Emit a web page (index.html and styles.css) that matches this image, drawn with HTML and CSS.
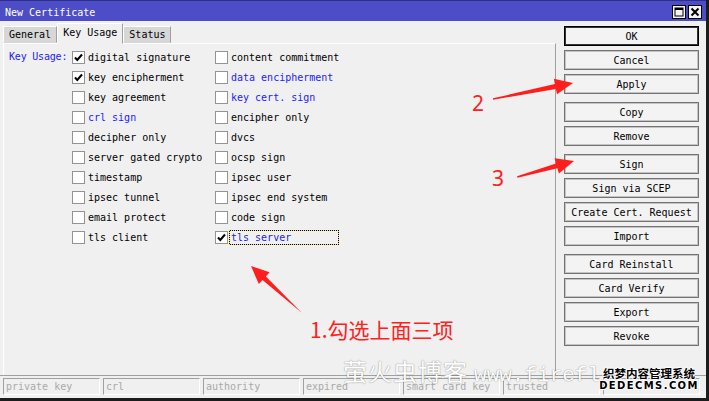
FILE: index.html
```html
<!DOCTYPE html>
<html lang="en">
<head>
  <meta charset="UTF-8" />
  <title>New Certificate</title>
  <link rel="stylesheet" href="styles.css">
</head>
<body>
  <div class="window">
    <div class="titlebar">
      <span class="title">New Certificate</span>
      <div class="title-btns">
        <span class="tbtn">
          <svg width="12" height="12" viewBox="0 0 12 12"><rect x="2" y="2" width="8" height="8" fill="none" stroke="#000" stroke-width="1"/><rect x="2" y="2" width="8" height="2" fill="#000"/></svg>
        </span>
        <span class="tbtn">
          <svg width="12" height="12" viewBox="0 0 12 12"><path d="M2.5 2.5 L9.5 9.5 M9.5 2.5 L2.5 9.5" stroke="#000" stroke-width="2"/></svg>
        </span>
      </div>
    </div>

    <div class="client">
      <div class="main">
        <div class="tabs">
          <div class="tab">General</div>
          <div class="tab active">Key Usage</div>
          <div class="tab">Status</div>
        </div>
        <div class="panel">
          <div class="grid">
            <div class="ku-label">Key Usage:</div>

            <div class="item"><span class="box on"><svg width="11" height="11" viewBox="0 0 11 11"><path d="M2 5.5 L4.3 8 L9 2.5" fill="none" stroke="#000" stroke-width="2"/></svg></span><span class="lbl">digital signature</span></div>
            <div class="item"><span class="box"></span><span class="lbl">content commitment</span></div>

            <div class="item"><span class="box on"><svg width="11" height="11" viewBox="0 0 11 11"><path d="M2 5.5 L4.3 8 L9 2.5" fill="none" stroke="#000" stroke-width="2"/></svg></span><span class="lbl">key encipherment</span></div>
            <div class="item"><span class="box"></span><span class="lbl blue">data encipherment</span></div>

            <div class="item"><span class="box"></span><span class="lbl">key agreement</span></div>
            <div class="item"><span class="box"></span><span class="lbl blue">key cert. sign</span></div>

            <div class="item"><span class="box"></span><span class="lbl blue">crl sign</span></div>
            <div class="item"><span class="box"></span><span class="lbl">encipher only</span></div>

            <div class="item"><span class="box"></span><span class="lbl">decipher only</span></div>
            <div class="item"><span class="box"></span><span class="lbl">dvcs</span></div>

            <div class="item"><span class="box"></span><span class="lbl">server gated crypto</span></div>
            <div class="item"><span class="box"></span><span class="lbl">ocsp sign</span></div>

            <div class="item"><span class="box"></span><span class="lbl">timestamp</span></div>
            <div class="item"><span class="box"></span><span class="lbl">ipsec user</span></div>

            <div class="item"><span class="box"></span><span class="lbl">ipsec tunnel</span></div>
            <div class="item"><span class="box"></span><span class="lbl">ipsec end system</span></div>

            <div class="item"><span class="box"></span><span class="lbl">email protect</span></div>
            <div class="item"><span class="box"></span><span class="lbl">code sign</span></div>

            <div class="item"><span class="box"></span><span class="lbl">tls client</span></div>
            <div class="item"><span class="box on"><svg width="11" height="11" viewBox="0 0 11 11"><path d="M2 5.5 L4.3 8 L9 2.5" fill="none" stroke="#000" stroke-width="2"/></svg></span><span class="focus"><span class="lbl blue">tls server</span></span></div>
          </div>
        </div>
      </div>

      <div class="side">
        <button class="btn default">OK</button>
        <button class="btn">Cancel</button>
        <button class="btn group-end">Apply</button>
        <button class="btn">Copy</button>
        <button class="btn group-end">Remove</button>
        <button class="btn">Sign</button>
        <button class="btn">Sign via SCEP</button>
        <button class="btn">Create Cert. Request</button>
        <button class="btn group-end">Import</button>
        <button class="btn">Card Reinstall</button>
        <button class="btn">Card Verify</button>
        <button class="btn">Export</button>
        <button class="btn">Revoke</button>
      </div>
    </div>

    <div class="status">
      <div class="field">private key</div>
      <div class="field">crl</div>
      <div class="field">authority</div>
      <div class="field">expired</div>
      <div class="field">smart card key</div>
      <div class="field">trusted</div>
      <div class="field"></div>
    </div>

    <!-- red hand-drawn hints -->
    <svg class="marks" width="709" height="401" viewBox="0 0 709 401">
      <polygon fill="#ff1e1e" points="251,266 269.6,272.3 265.9,276.4 302,313 262.5,280 258.8,284.1"/>
      <polygon fill="#ff1e1e" points="573,83 553.8,78.7 554.9,84.1 493,98.3 493,99.8 555.9,88.9 557,94.3"/>
      <polygon fill="#ff1e1e" points="574,161 554.5,158.2 556,163.5 517,176.2 517.5,177.8 557.4,168.3 558.9,173.6"/>
    </svg>
    <span class="note note-1">1.勾选上面三项</span>
    <span class="note note-2">2</span>
    <span class="note note-3">3</span>

    <div class="watermark"><span class="wm-cjk">萤火虫博客</span> <span class="wm-url">www.firefly</span></div>
    <div class="logo">
      <span class="logo-cn">织梦内容管理系统</span>
      <span class="logo-en">DEDECMS.COM</span>
    </div>
  </div>
</body>
</html>
```

FILE: styles.css
```css
body {
  margin: 0;
  background: #f0f0f0;
  font-family: "DejaVu Sans Mono", "Liberation Mono", monospace;
  font-size: 10px;
  color: #000;
}
.window {
  position: relative;
  width: 709px;
  height: 401px;
  box-sizing: border-box;
  border-right: 3px solid #1c1c1c;
  border-bottom: 3px solid #1c1c1c;
  background: #f0f0f0;
  overflow: hidden;
  display: flex;
  flex-direction: column;
}

/* title bar */
.titlebar {
  height: 21px;
  flex: none;
  box-sizing: border-box;
  border-top: 1px solid #2e2e86;
  background: #4d4dc7;
  color: #fff;
  display: flex;
  align-items: center;
  justify-content: space-between;
  padding: 1px 4px 0 5px;
}
.title { padding-top: 2px; }
.title-btns { display: flex; gap: 2px; }
.tbtn {
  width: 14px;
  height: 14px;
  box-sizing: border-box;
  border: 1px solid #000;
  background: #f4f4f4;
  display: flex;
  align-items: center;
  justify-content: center;
}

/* client area */
.client {
  height: 355px;
  flex: none;
  box-sizing: border-box;
  border-bottom: 1px solid #a0a0a0;
  display: flex;
}
.main {
  width: 556px;
  display: flex;
  flex-direction: column;
}
.tabs {
  height: 22px;
  flex: none;
  display: flex;
  align-items: flex-end;
  padding-left: 3px;
}
.tab {
  height: 17px;
  box-sizing: border-box;
  padding: 0 5px;
  line-height: 15px;
  background: #d7d7d7;
  border: 1px solid;
  border-color: #fff #a0a0a0 transparent #fff;
}
.tab.active {
  height: 21px;
  margin-bottom: -1px;
  line-height: 17px;
  background: #f0f0f0;
  position: relative;
  z-index: 1;
}
.panel {
  flex: 1;
  margin-left: 3px;
  border-top: 1px solid #fff;
  border-left: 1px solid #fff;
  border-right: 1px solid #a0a0a0;
  padding: 3px 0 0 5px;
}
.grid {
  display: grid;
  grid-template-columns: 63px 143px auto;
  grid-auto-rows: 20px;
}
.ku-label {
  grid-row: 1 / span 10;
  height: 20px;
  line-height: 20px;
  letter-spacing: -0.2px;
  color: #1c1cff;
}
.item {
  display: flex;
  align-items: center;
}
.box {
  width: 13px;
  height: 13px;
  flex: none;
  box-sizing: border-box;
  border: 1px solid #939393;
  background: #fff;
  display: flex;
  align-items: center;
  justify-content: center;
}
.lbl {
  border: 1px solid transparent;
  padding: 0 1px;
  margin-left: 1px;
  white-space: nowrap;
}
.blue { color: #1c1cff; }
.focus {
  margin-left: 1px;
  width: 110px;
  height: 15px;
  box-sizing: border-box;
  padding: 1px;
  display: flex;
  background: repeating-conic-gradient(#000 0 25%, #ffe800 0 50%) 0 0 / 2px 2px;
}
.focus .lbl {
  flex: 1;
  margin: 0;
  border: none;
  padding: 0 0 0 1px;
  line-height: 13px;
  background: #f0f0f0;
}

/* button column */
.side {
  flex: 1;
  padding: 5px 0 0 8px;
  display: flex;
  flex-direction: column;
  gap: 4px;
}
.btn {
  width: 135px;
  height: 20px;
  padding: 0;
  font: inherit;
  color: #000;
  background: #f3f3f3;
  border: 1px solid #737373;
  box-shadow: inset 0 0 0 1px #c4c4c4;
}
.btn.default {
  border-color: #000;
  box-shadow: inset 0 0 0 1px #333;
}
.btn.group-end { margin-bottom: 4px; }

/* status fields */
.status {
  flex: 1;
  display: flex;
  gap: 3px;
  padding: 2px 0 0 3px;
}
.field {
  width: 97px;
  height: 17px;
  box-sizing: border-box;
  border: 1px solid;
  border-color: #a0a0a0 #fff #fff #a0a0a0;
  padding-left: 2px;
  line-height: 15px;
  color: #a9a9a9;
}

/* overlays */
.marks {
  position: absolute;
  left: 0;
  top: 0;
  pointer-events: none;
}
.note {
  position: absolute;
  color: #ff2020;
  line-height: 21px;
  font-size: 21px;
  white-space: nowrap;
}
.note-1 {
  left: 310px;
  top: 319px;
  font-family: "Noto Sans CJK SC", sans-serif;
}
.note-2 {
  left: 472px;
  top: 93px;
  font-family: "Noto Sans", sans-serif;
}
.note-3 {
  left: 492px;
  top: 168px;
  font-family: "Noto Sans", sans-serif;
}
.watermark {
  position: absolute;
  left: 343px;
  top: 358px;
  width: 257px;
  overflow: hidden;
  white-space: nowrap;
  color: #fff;
  text-shadow: 0 0 1px rgba(0, 0, 0, 0.45), 0 0 2px rgba(0, 0, 0, 0.15);
  line-height: 26px;
}
.wm-cjk {
  font-family: "Noto Sans CJK SC", sans-serif;
  font-size: 24px;
  letter-spacing: 1px;
}
.wm-url {
  font-family: "Liberation Mono", monospace;
  font-size: 21px;
}
.logo {
  position: absolute;
  left: 599px;
  top: 366px;
  width: 100px;
  display: flex;
  flex-direction: column;
  align-items: center;
  color: #000;
  font-weight: bold;
  text-shadow: 1px 0 #fff, -1px 0 #fff, 0 1px #fff, 0 -1px #fff;
}
.logo-cn {
  font-family: "Noto Sans CJK SC", sans-serif;
  font-size: 11.5px;
  line-height: 14px;
}
.logo-en {
  font-family: "DejaVu Sans", sans-serif;
  font-size: 10px;
  line-height: 12px;
  letter-spacing: 1.4px;
}
```
